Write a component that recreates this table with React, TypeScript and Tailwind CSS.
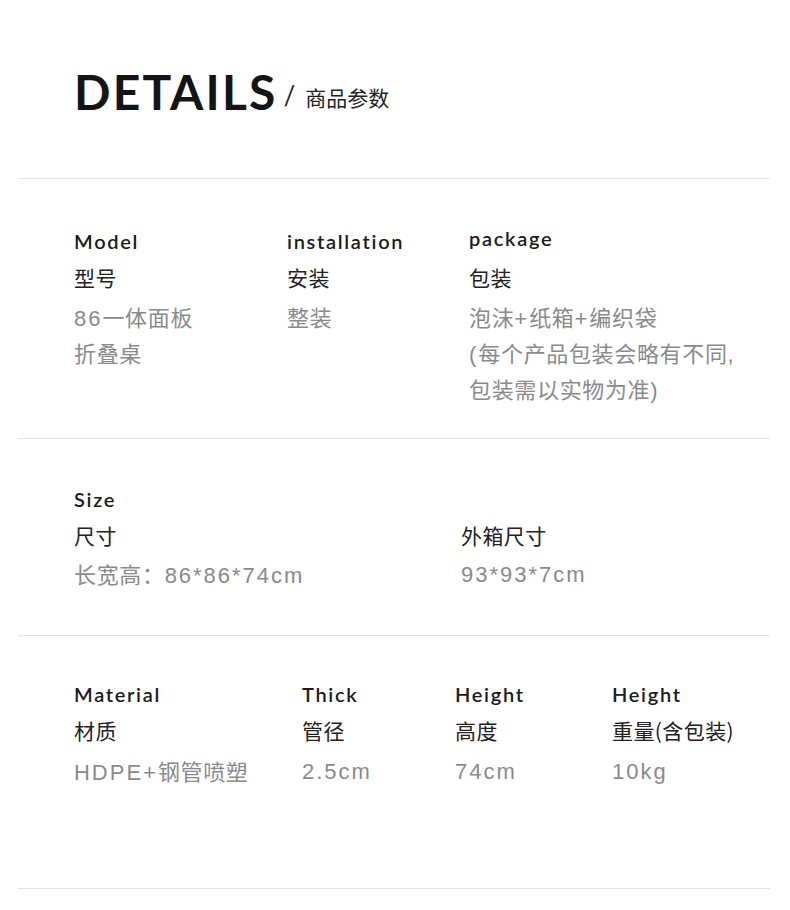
import React from "react";

const latin = "font-['Lato','Noto_Sans_CJK_SC',sans-serif]";
const cn = "font-['Noto_Sans_CJK_SC',sans-serif]";
const val = "font-['Liberation_Sans','Noto_Sans_CJK_SC',sans-serif]";

function Label({ children, up = false }: { children: React.ReactNode; up?: boolean }) {
  return (
    <div
      className={`${latin} ${up ? "-mt-[3px] mb-[3px]" : ""} h-[36px] leading-[36px] text-[20px] font-semibold tracking-[0.085em] text-[#1b1b1b] whitespace-nowrap`}
    >
      {children}
    </div>
  );
}
function Title({ children }: { children: React.ReactNode }) {
  return (
    <div className={`${cn} h-[36px] leading-[36px] text-[21px] tracking-[0.02em] text-[#222] whitespace-nowrap`}>
      {children}
    </div>
  );
}

function Runs({ text }: { text: string }) {
  const parts = text.match(/[\u3000-\u9fff\uff00-\uffef]+|[^\u3000-\u9fff\uff00-\uffef]+/g) || [];
  return (
    <>
      {parts.map((p, i) =>
        /[\u3000-\u9fff\uff00-\uffef]/.test(p) ? (
          <span key={i} className={`${cn} tracking-[0.03em]`}>
            {p}
          </span>
        ) : (
          <span key={i} className={`${val} tracking-[0.09em]`}>
            {p}
          </span>
        )
      )}
    </>
  );
}

function Values({ lines, mt = "mt-[5px]" }: { lines: string[]; mt?: string }) {
  return (
    <div className={`${mt} text-[22px] leading-[36px] text-[#8a8a8a]`}>
      {lines.map((l) => (
        <div key={l} className="h-[36px] whitespace-nowrap">
          <Runs text={l} />
        </div>
      ))}
    </div>
  );
}

export default function App() {
  return (
    <div className="w-[790px] h-[910px] bg-white overflow-hidden">
      <div className="h-[178px] pl-[74px] pt-[68px] flex items-start">
        <span className={`${latin} text-[48px] font-bold tracking-[0.045em] text-[#141414] leading-none`}>
          DETAILS
        </span>
        <span className={`${latin} text-[26px] text-[#222] ml-[6px] mt-[14px] leading-none`}>/</span>
        <span className={`${cn} text-[21px] text-[#222] ml-[10px] mt-[19px] leading-none`}>商品参数</span>
      </div>

      <div className="ml-[18px] mr-[20px] border-t border-[#e3e3e3] h-[260px]">
        <div className="pt-[44px] pl-[56px] flex">
          <div className="w-[213px]">
            <Label>Model</Label>
            <Title>型号</Title>
            <Values lines={["86一体面板", "折叠桌"]} mt="mt-[3px]" />
          </div>
          <div className="w-[182px]">
            <Label>installation</Label>
            <Title>安装</Title>
            <Values lines={["整装"]} mt="mt-[3px]" />
          </div>
          <div>
            <Label up>package</Label>
            <Title>包装</Title>
            <Values lines={["泡沫+纸箱+编织袋", "(每个产品包装会略有不同,", "包装需以实物为准)"]} mt="mt-[3px]" />
          </div>
        </div>
      </div>

      <div className="ml-[18px] mr-[20px] border-t border-[#e3e3e3] h-[197px]">
        <div className="pt-[42px] pl-[56px]">
          <Label>Size</Label>
          <div className="flex">
            <div className="w-[387px]">
              <Title>尺寸</Title>
              <Values lines={["长宽高：86*86*74cm"]} mt="mt-[2px]" />
            </div>
            <div>
              <Title>外箱尺寸</Title>
              <Values lines={["93*93*7cm"]} mt="mt-[2px]" />
            </div>
          </div>
        </div>
      </div>

      <div className="ml-[18px] mr-[20px] border-t border-[#e3e3e3] h-[253px]">
        <div className="pt-[40px] pl-[56px] flex">
          <div className="w-[228px]">
            <Label>Material</Label>
            <Title>材质</Title>
            <Values lines={["HDPE+钢管喷塑"]} mt="mt-[4px]" />
          </div>
          <div className="w-[153px]">
            <Label>Thick</Label>
            <Title>管径</Title>
            <Values lines={["2.5cm"]} mt="mt-[4px]" />
          </div>
          <div className="w-[157px]">
            <Label>Height</Label>
            <Title>高度</Title>
            <Values lines={["74cm"]} mt="mt-[4px]" />
          </div>
          <div>
            <Label>Height</Label>
            <Title>重量(含包装)</Title>
            <Values lines={["10kg"]} mt="mt-[4px]" />
          </div>
        </div>
      </div>

      <div className="ml-[18px] mr-[20px] border-t border-[#e3e3e3]" />
    </div>
  );
}
